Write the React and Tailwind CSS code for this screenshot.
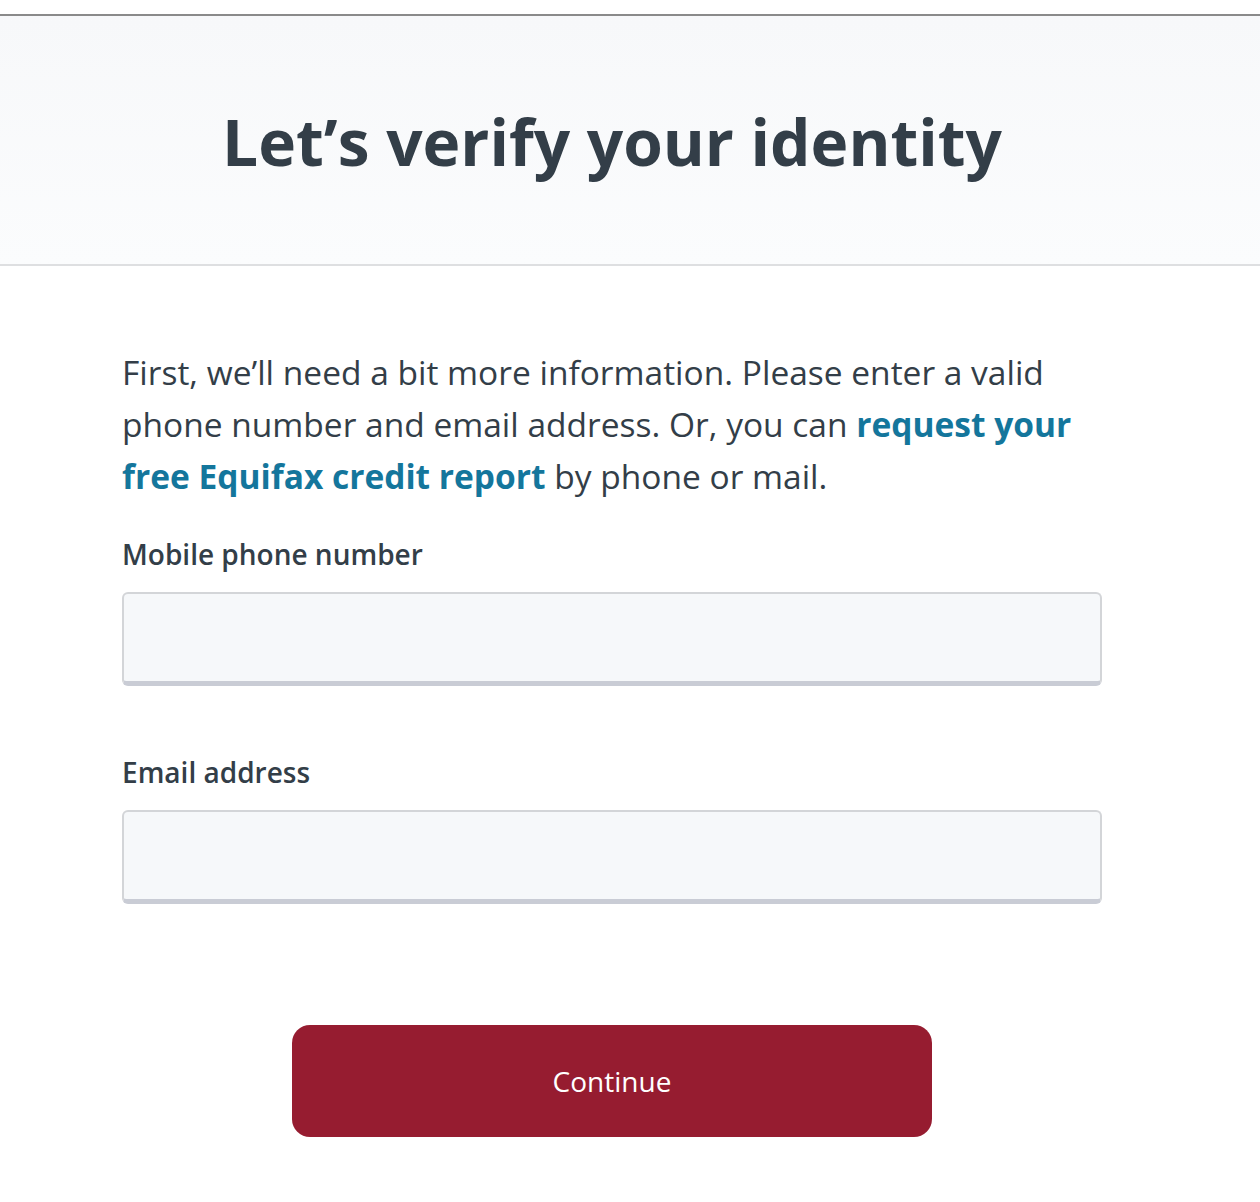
import React from 'react';

const font = { fontFamily: '"Open Sans", "Liberation Sans", sans-serif' };

export default function App() {
  return (
    <div className="min-h-[1202px] w-[1260px] bg-white text-[#333e48]" style={font}>
      <div className="h-[14px] bg-white" />
      <div className="h-[2px] bg-[#8a8a8a]" />
      <header className="flex h-[250px] w-full items-center border-b-2 border-[#dedfe1] bg-gradient-to-b from-[#f7f8fa] to-[#fbfcfd]">
        <div className="flex w-[1224px] justify-center pt-[4px]">
          <h1 className="text-[64px] font-bold tracking-[0px] text-[#333e48]">Let’s verify your identity</h1>
        </div>
      </header>

      <main className="px-[122px] pt-[80px]">
        <p className="w-[980px] text-[33.5px] leading-[52px] text-[#333e48]">
          First, we’ll need a bit more information. Please enter a valid phone number and email address. Or, you can{' '}
          <a className="font-bold text-[#14769c]">request your free Equifax credit report</a> by phone or mail.
        </p>

        <div className="mt-[32px] flex w-[980px] flex-col">
          <label className="text-[28px] font-semibold leading-[40px] text-[#333e48]">Mobile phone number</label>
          <input className="mt-[18px] h-[94px] rounded-[6px] border-2 border-b-[5px] border-[#d3d5d8] border-b-[#c9ccd5] bg-[#f6f8fa] px-4 text-[28px] outline-none" />

          <label className="mt-[66px] text-[28px] font-semibold leading-[40px] text-[#333e48]">Email address</label>
          <input className="mt-[18px] h-[94px] rounded-[6px] border-2 border-b-[5px] border-[#d3d5d8] border-b-[#c9ccd5] bg-[#f6f8fa] px-4 text-[28px] outline-none" />
        </div>

        <div className="mt-[121px] flex w-[980px] justify-center">
          <button className="h-[112px] w-[640px] rounded-[18px] bg-[#961c30] text-[28px] text-white">Continue</button>
        </div>
      </main>
    </div>
  );
}
